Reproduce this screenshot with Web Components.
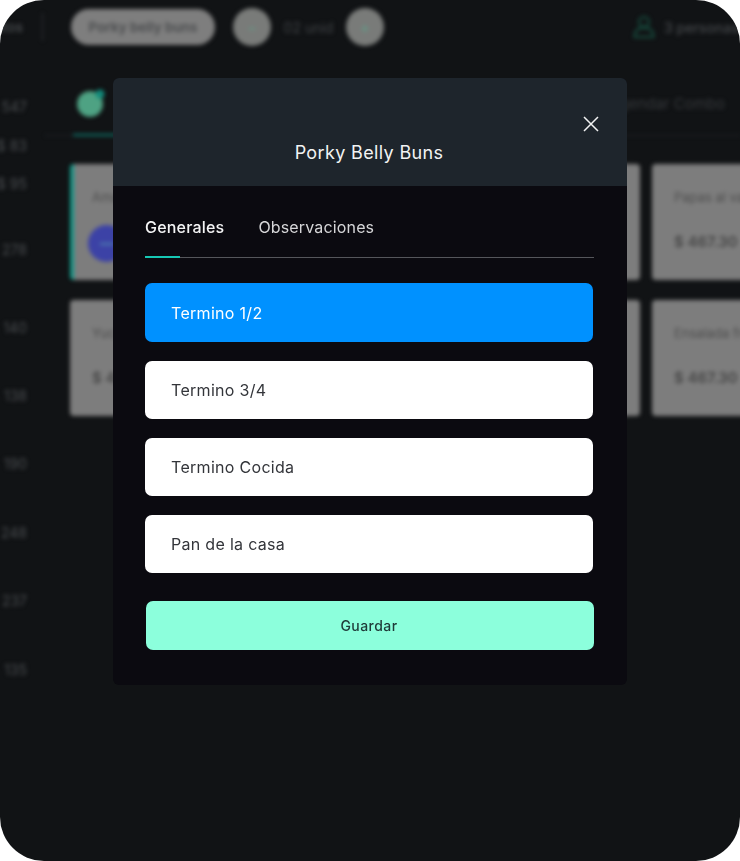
<!DOCTYPE html>
<html lang="es">
<head>
<meta charset="utf-8">
<title>Porky Belly Buns</title>
<style>
  html, body { margin: 0; background: #fff; }
  body { width: 740px; height: 861px; overflow: hidden; font-family: Inter, "Noto Sans", sans-serif; }
</style>
</head>
<body>
<pos-frame>
  <pos-backdrop></pos-backdrop>
  <option-modal title-text="Porky Belly Buns">
    <option-row active>Termino 1/2</option-row>
    <option-row>Termino 3/4</option-row>
    <option-row>Termino Cocida</option-row>
    <option-row>Pan de la casa</option-row>
  </option-modal>
</pos-frame>

<script>
class PosFrame extends HTMLElement {
  constructor() {
    super();
    this.attachShadow({ mode: 'open' }).innerHTML = `
      <style>
        :host { display: block; position: relative; width: 740px; height: 861px; background: #111315; border-radius: 44px; overflow: hidden; }
      </style>
      <slot></slot>`;
  }
}

class PosBackdrop extends HTMLElement {
  constructor() {
    super();
    // number and the gap above it
    const side = [
      ['547', 43], ['$ 83', 21], ['$ 95', 20], ['278', 48], ['140', 60], ['138', 50],
      ['190', 50], ['248', 51], ['237', 50], ['135', 51]
    ];
    // the middle cards sit behind the modal, so they carry no text
    const cards = [
      ['Amaretto', '', true], ['', ''], ['', ''], ['Papas al vapor', '$ 467.30'],
      ['Yuca', '$ 467.30'], ['', ''], ['', ''], ['Ensalada fresca', '$ 467.30']
    ];
    this.attachShadow({ mode: 'open' }).innerHTML = `
      <style>
        :host { display: grid; grid-template-columns: 70px 670px; grid-template-rows: 55px 1fr; height: 100%; filter: blur(2px); color: #56595c; font-size: 14px; }
        .top { grid-column: 1 / 3; display: flex; align-items: center; padding-bottom: 1px; white-space: nowrap; }
        .crumb { width: 43px; height: 28px; line-height: 28px; border-right: 1px solid #303337; box-sizing: border-box; display: flex; justify-content: flex-end; padding-right: 19px; flex: none; margin-right: 28px; color: #4d5053; font-weight: 500; overflow: hidden; }
        .pill { width: 144px; height: 36px; border-radius: 18px; background: #7e7e7e; color: #484a4c; font-weight: 600; font-size: 13.5px; display: flex; align-items: center; justify-content: center; flex: none; }
        .round { width: 38px; height: 38px; border-radius: 50%; background: #797b79; color: #5f9e88; display: flex; align-items: center; justify-content: center; flex: none; font-size: 15px; }
        .qty { width: 75px; text-align: center; font-size: 14px; color: #3f4245; flex: none; }
        .guests { margin-left: 249px; display: flex; align-items: center; gap: 9px; color: #44474a; font-weight: 500; }
        .side { display: flex; flex-direction: column; align-items: flex-end; padding-right: 43px; color: #4a4d50; font-size: 14px; }
        .side span { display: block; line-height: 18px; white-space: nowrap; }
        .main { display: flex; flex-direction: column; min-width: 0; }
        .tabs { height: 81px; margin-left: -25px; border-bottom: 1px solid #212428; box-sizing: border-box; display: flex; }
        .tab-on { margin-left: 28px; width: 80px; height: 81px; border-bottom: 2px solid #0f7c72; box-sizing: border-box; padding: 33px 0 0 4px; }
        .agendar { margin-left: auto; margin-right: 15px; padding-top: 39px; font-size: 15px; color: #36393c; }
        .grid { display: grid; grid-template-columns: repeat(4, 182px); grid-auto-rows: 116px; gap: 20px 12px; margin-top: 28px; }
        .card { background: #7d7d7d; border-radius: 4px; padding: 25px 22px; box-sizing: border-box; color: #4d4d4d; font-size: 13px; line-height: 16px; white-space: nowrap; overflow: hidden; }
        .card.on { border-left: 4px solid #149a8a; padding-left: 18px; }
        .card b { display: block; margin-top: 28px; font-size: 15px; line-height: 18px; font-weight: 600; color: #464646; }
        .dot { width: 37px; height: 37px; border-radius: 50%; background: #3c42a6; margin: 20px 0 0 -4px; display: flex; align-items: center; justify-content: center; }
        .dot::after { content: ""; width: 14px; height: 2px; background: #4f83b0; }
      </style>
      <div class="top">
        <div class="crumb">Platos</div>
        <div class="pill">Porky belly buns</div>
        <div class="round" style="margin-left:18px">&minus;</div>
        <div class="qty">02 unid</div>
        <div class="round">+</div>
        <div class="guests">
          <svg width="22" height="24" viewBox="0 0 22 24" fill="none" stroke="#174f40" stroke-width="2"><circle cx="11" cy="7" r="5"/><path d="M1.5 22c0-5 3-8 6-9h7c3 1 6 4 6 9z"/></svg>
          <span>3 personas</span>
        </div>
      </div>
      <div class="side">${side.map(([t, m]) => `<span style="margin-top:${m}px">${t}</span>`).join('')}</div>
      <div class="main">
        <div class="tabs">
          <div class="tab-on">
            <svg width="28" height="30" viewBox="0 0 28 30"><circle cx="13" cy="16" r="13" fill="#4ea283"/><circle cx="23" cy="6" r="4.5" fill="#128c7c"/></svg>
          </div>
          <div class="agendar">Agendar Combo</div>
        </div>
        <div class="grid">
          ${cards.map(([n, p, on]) => `<div class="card${on ? ' on' : ''}">${n}${on ? '<div class="dot"></div>' : p ? `<b>${p}</b>` : ''}</div>`).join('')}
        </div>
      </div>`;
  }
}

class OptionModal extends HTMLElement {
  constructor() {
    super();
    this.attachShadow({ mode: 'open' }).innerHTML = `
      <style>
        :host { display: flex; flex-direction: column; position: absolute; left: 113px; top: 78px; width: 514px; height: 607px; border-radius: 6px; overflow: hidden; background: #0b0a10; color: #fff; }
        header { height: 108px; flex: none; background: #1e252c; display: flex; align-items: flex-end; justify-content: center; padding: 0 2px 21px 0; box-sizing: border-box; position: relative; font-size: 18px; font-weight: 400; line-height: 24px; color: #f2f3f3; letter-spacing: .35px; }
        .close { position: absolute; left: 470px; top: 38px; width: 16px; height: 16px; }
        .body { flex: 1; display: flex; flex-direction: column; padding: 0 34px 0 32px; }
        .tabs { display: flex; gap: 34px; height: 72px; box-sizing: border-box; border-bottom: 1px solid #55565b; margin-right: -1px; padding-top: 31px; font-size: 16px; line-height: 20px; letter-spacing: .15px; color: #d6d6d8; position: relative; }
        .tabs .on { color: #f4f4f5; font-weight: 500; letter-spacing: .2px; }
        .tabs i { position: absolute; left: 0; bottom: -1px; width: 35px; height: 2px; background: #16c7b4; }
        .opts { display: flex; flex-direction: column; gap: 19px; margin-top: 25px; }
        button { margin: 28px -1px 0 1px; padding: 0 2px 0 0; height: 49px; border: 0; border-radius: 7px; background: #8cffdc; color: #1f3a38; font: 500 14px Inter, "Noto Sans", sans-serif; letter-spacing: .45px; }
      </style>
      <header>
        <span id="title"></span>
        <svg class="close" viewBox="0 0 16 16" fill="none" stroke="#f2f3f3" stroke-width="1.5"><path d="M1 1l14 14M15 1L1 15"/></svg>
      </header>
      <div class="body">
        <div class="tabs"><span class="on">Generales</span><span>Observaciones</span><i></i></div>
        <div class="opts"><slot></slot></div>
        <button>Guardar</button>
      </div>`;
    this.shadowRoot.querySelector('#title').textContent = this.getAttribute('title-text');
  }
}

class OptionRow extends HTMLElement {
  constructor() {
    super();
    this.attachShadow({ mode: 'open' }).innerHTML = `
      <style>
        :host { display: flex; align-items: center; height: 58px; padding: 0 0 0 26px; box-sizing: border-box; border-radius: 7px; background: #fff; color: #33353a; font-size: 16px; letter-spacing: .3px; }
        :host([active]) { background: #0091ff; color: #fff; height: 59px; }
      </style>
      <slot></slot>`;
  }
}

customElements.define('pos-frame', PosFrame);
customElements.define('pos-backdrop', PosBackdrop);
customElements.define('option-modal', OptionModal);
customElements.define('option-row', OptionRow);
</script>
</body>
</html>
